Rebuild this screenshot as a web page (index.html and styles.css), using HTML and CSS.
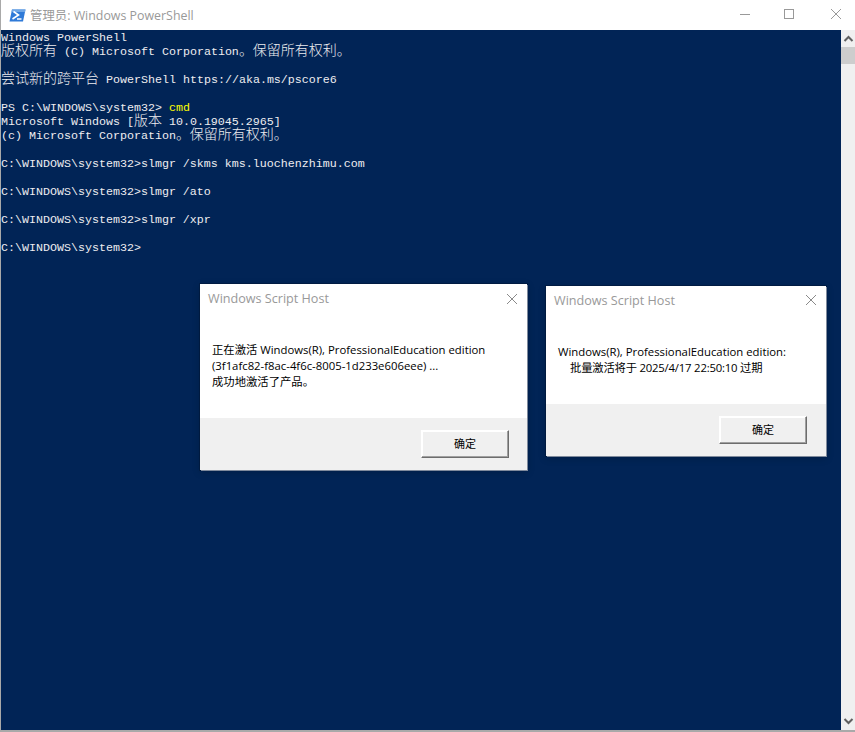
FILE: index.html
```html
<!DOCTYPE html>
<html lang="zh-CN">
<head>
<meta charset="utf-8">
<title>管理员: Windows PowerShell</title>
<link rel="stylesheet" href="styles.css">
</head>
<body>
<div class="window">
  <header class="titlebar">
    <svg class="ps-icon" width="17" height="13" viewBox="0 0 17 13"><path d="M3 0.5H16.5L14 12.5H0.5Z" fill="#2f7ad8"/><path d="M3 0.5H16.5L16 3H2.5Z" fill="#6ea6e6"/><path d="M4.5 2.5L9.5 6L3.5 10" fill="none" stroke="#fff" stroke-width="1.6"/><path d="M8 10H12.5" stroke="#fff" stroke-width="1.5"/></svg>
    <span class="title">管理员: Windows PowerShell</span>
    <div class="controls">
      <svg class="ctl" width="46" height="30" viewBox="0 0 46 30"><path d="M23 14.5H33" stroke="#999" fill="none"/></svg>
      <svg class="ctl" width="46" height="30" viewBox="0 0 46 30"><rect x="21.5" y="9.5" width="9" height="9" stroke="#999" fill="none"/></svg>
      <svg class="ctl" width="46" height="30" viewBox="0 0 46 30"><path d="M22 9L32 19M32 9L22 19" stroke="#999" fill="none"/></svg>
    </div>
  </header>
  <div class="body">
    <main class="console">
      <div class="line">Windows PowerShell</div>
      <div class="line"><span class="cjk">版权所有</span> (C) Microsoft Corporation<span class="cjk">。保留所有权利。</span></div>
      <div class="line"></div>
      <div class="line"><span class="cjk">尝试新的跨平台</span> PowerShell https://aka.ms/pscore6</div>
      <div class="line"></div>
      <div class="line">PS C:\WINDOWS\system32&gt; <span class="yellow">cmd</span></div>
      <div class="line">Microsoft Windows [<span class="cjk">版本</span> 10.0.19045.2965]</div>
      <div class="line">(c) Microsoft Corporation<span class="cjk">。保留所有权利。</span></div>
      <div class="line"></div>
      <div class="line">C:\WINDOWS\system32&gt;slmgr /skms kms.luochenzhimu.com</div>
      <div class="line"></div>
      <div class="line">C:\WINDOWS\system32&gt;slmgr /ato</div>
      <div class="line"></div>
      <div class="line">C:\WINDOWS\system32&gt;slmgr /xpr</div>
      <div class="line"></div>
      <div class="line">C:\WINDOWS\system32&gt;</div>
    </main>
    <aside class="scrollbar">
      <svg class="arrow" width="14" height="17" viewBox="0 0 14 17"><path d="M3.5 11L7.5 7L11.5 11" fill="none" stroke="#606060" stroke-width="2"/></svg>
      <div class="thumb"></div>
      <div class="track"></div>
      <svg class="arrow" width="14" height="17" viewBox="0 0 14 17"><path d="M3.5 6L7.5 10L11.5 6" fill="none" stroke="#606060" stroke-width="2"/></svg>
    </aside>
  </div>
</div>

<section class="dialog dialog-a">
  <div class="dlg-head">
    <span class="dlg-title">Windows Script Host</span>
    <svg class="dlg-close" width="12" height="12" viewBox="0 0 12 12"><path d="M1 1L11 11M11 1L1 11" stroke="#8a8a8a" fill="none"/></svg>
  </div>
  <div class="dlg-msg">
    <div>正在激活 Windows(R), ProfessionalEducation edition</div>
    <div>(3f1afc82-f8ac-4f6c-8005-1d233e606eee) ...</div>
    <div>成功地激活了产品。</div>
  </div>
  <div class="dlg-foot"><button class="dlg-btn">确定</button></div>
</section>

<section class="dialog dialog-b">
  <div class="dlg-head">
    <span class="dlg-title">Windows Script Host</span>
    <svg class="dlg-close" width="12" height="12" viewBox="0 0 12 12"><path d="M1 1L11 11M11 1L1 11" stroke="#8a8a8a" fill="none"/></svg>
  </div>
  <div class="dlg-msg">
    <div>Windows(R), ProfessionalEducation edition:</div>
    <div class="indent">批量激活将于 2025/4/17 22:50:10 过期</div>
  </div>
  <div class="dlg-foot"><button class="dlg-btn">确定</button></div>
</section>
</body>
</html>
```
FILE: styles.css
```css
* { box-sizing: border-box; }
html, body { margin: 0; padding: 0; }
body {
  width: 855px;
  height: 732px;
  overflow: hidden;
  position: relative;
  background: #fff;
}
.window {
  width: 855px;
  height: 732px;
  display: flex;
  flex-direction: column;
  border-left: 1px solid #a9a9a9;
  border-bottom: 2px solid #a9a9a9;
}
.titlebar {
  height: 30px;
  flex: none;
  display: flex;
  align-items: center;
  padding-left: 8px;
  background: #fff;
}
.ps-icon { flex: none; }
.title {
  margin-left: 4px;
  font: 12.4px "Open Sans", "Noto Sans CJK SC", sans-serif;
  color: #999;
}
.controls {
  margin-left: auto;
  display: flex;
}
.ctl { display: block; }
.body {
  flex: 1;
  display: flex;
  min-height: 0;
}
.console {
  flex: 1;
  padding-top: 1px;
  background: #012456;
  color: #eeedf0;
  font: 11.67px/14px "Liberation Mono", "Noto Sans CJK SC", monospace;
  overflow: hidden;
}
.line { height: 14px; line-height: 14px; white-space: pre; }
.cjk { font: 300 14px/0 "Noto Sans CJK SC", sans-serif; }
.yellow { color: #ffff00; }
.scrollbar {
  width: 14px;
  flex: none;
  background: #f0f0f0;
  display: flex;
  flex-direction: column;
}
.arrow { display: block; flex: none; }
.thumb { height: 17px; background: #cdcdcd; flex: none; }
.track { flex: 1; }
.dialog {
  position: absolute;
  display: flex;
  flex-direction: column;
  background: #fff;
  box-shadow: 1px 1px 0 #7f8a9c, 0 0 0 1px rgba(0, 0, 0, 0.18), 0 2px 8px rgba(0, 0, 0, 0.2);
  font-family: "Open Sans", "Noto Sans CJK SC", sans-serif;
}
.dialog-a { left: 200px; top: 284px; width: 327px; height: 186px; }
.dialog-b { left: 546px; top: 286px; width: 280px; height: 170px; }
.dlg-head {
  height: 29px;
  flex: none;
  display: flex;
  align-items: center;
  justify-content: space-between;
  padding: 0 9px 0 8px;
}
.dialog-b .dlg-head { height: 28px; }
.dlg-title { font-size: 12.6px; color: #999; }
.dlg-close { display: block; }
.dlg-msg {
  flex: 1;
  padding: 29px 12px 0;
  font-size: 11.33px;
  line-height: 16px;
  color: #000;
}
.dialog-b .dlg-msg { padding-top: 30px; }
.indent { padding-left: 12px; letter-spacing: -0.2px; }
.dlg-foot {
  flex: none;
  height: 52px;
  background: #f0f0f0;
  display: flex;
  justify-content: flex-end;
  align-items: flex-start;
  padding: 12px 18px 0 0;
}
.dialog-b .dlg-foot { padding-right: 19px; }
.dlg-btn {
  width: 88px;
  height: 28px;
  padding: 0 0 2px;
  background: #f0f0f0;
  border: 1px solid;
  border-color: #fff #6d6d6d #6d6d6d #fff;
  box-shadow: inset -1px -1px 0 #a0a0a0, inset 1px 1px 0 #fff;
  font: 11px "Noto Sans CJK SC", sans-serif;
  color: #000;
}
```
